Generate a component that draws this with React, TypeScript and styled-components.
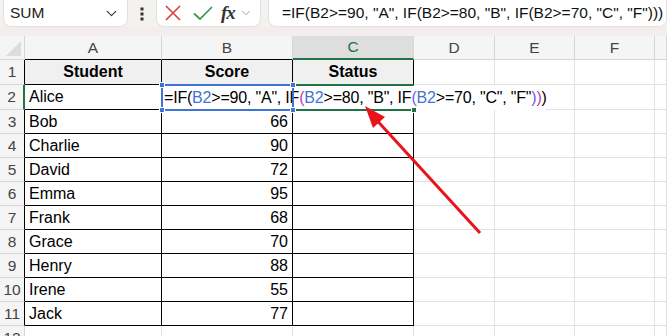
import styled, { createGlobalStyle } from "styled-components";
import { ChevronDown } from "lucide-react";

const Global = createGlobalStyle`
  html, body { margin: 0; padding: 0; }
  body {
    width: 667px;
    height: 336px;
    overflow: hidden;
    background: #f4f2f1;
    font-family: "Liberation Sans", Arial, sans-serif;
  }
`;

const Page = styled.div`
  width: 667px;
  height: 336px;
  overflow: hidden;
  position: relative;
  display: flex;
  flex-direction: column;
`;

const Toolbar = styled.div`
  display: flex;
  flex-shrink: 0;
  align-items: stretch;
  height: 27px;
  padding: 0 0 0 3px;
  gap: 7px;
  background: #f4f2f1;
`;

const Box = styled.div<{ $w?: number }>`
  display: flex;
  align-items: center;
  background: #fff;
  border: 1px solid #e3e1df;
  border-top: none;
  border-radius: 0 0 8px 8px;
  box-sizing: border-box;
  width: ${(p) => (p.$w ? `${p.$w}px` : "auto")};
  flex: ${(p) => (p.$w ? "none" : "1")};
`;

const NameText = styled.span`
  flex: 1;
  padding-left: 6px;
  font-size: 15.5px;
  color: #222;
`;

const Dots = styled.div`
  width: 14px;
  display: flex;
  align-items: center;
  justify-content: center;
`;

const FxText = styled.span`
  font-family: "Liberation Serif", "DejaVu Serif", serif;
  font-style: italic;
  font-weight: bold;
  font-size: 19px;
  color: #333;
  margin-left: 8px;
  letter-spacing: -1px;
`;

const FormulaText = styled.span`
  padding-left: 13px;
  font-size: 15.5px;
  color: #111;
  white-space: nowrap;
`;

const Band = styled.div`
  flex-shrink: 0;
  height: 9px;
  background: #f3eeed;
`;

const Sheet = styled.div`
  position: relative;
  flex: 1;
  min-height: 0;
  display: grid;
  grid-template-columns: 25px 137px 131px 121px 81px 80px 80px 1fr;
  grid-template-rows: 24px 25px 25px repeat(10, 24px);
  background: #fff;
`;

const ColHead = styled.div<{ $sel?: boolean; $dark?: boolean }>`
  display: flex;
  align-items: center;
  justify-content: center;
  font-size: 15.5px;
  color: ${(p) => (p.$sel ? "#1e7145" : "#444")};
  background: ${(p) => (p.$sel ? "#dedede" : "#f5f5f5")};
  border-right: 1px solid #d6d6d6;
  border-bottom: ${(p) =>
    p.$sel ? "2px solid #217346" : p.$dark ? "1px solid #000" : "1px solid #d6d6d6"};
  box-sizing: border-box;
`;

const Corner = styled.div`
  background: #f5f5f5;
  border-right: 1px solid #d6d6d6;
  border-bottom: 1px solid #d6d6d6;
  box-sizing: border-box;
  position: relative;
  &::after {
    content: "";
    position: absolute;
    right: 3px;
    bottom: 3px;
    border-left: 15px solid transparent;
    border-bottom: 15px solid #dcdcdc;
  }
`;

const RowHead = styled.div<{ $sel?: boolean; $dark?: boolean }>`
  display: flex;
  align-items: center;
  justify-content: center;
  font-size: 15.5px;
  color: #444;
  background: #f5f5f5;
  border-bottom: 1px solid #d6d6d6;
  border-right: ${(p) =>
    p.$sel ? "2px solid #217346" : p.$dark ? "1px solid #000" : "1px solid #d6d6d6"};
  box-sizing: border-box;
`;

const Cell = styled.div<{ $table?: boolean; $head?: boolean; $num?: boolean }>`
  display: flex;
  align-items: center;
  justify-content: ${(p) => (p.$head ? "center" : p.$num ? "flex-end" : "flex-start")};
  padding: 0 4px;
  font-size: 16px;
  font-weight: ${(p) => (p.$head ? "bold" : "normal")};
  color: #000;
  background: ${(p) => (p.$head ? "#f0f0f0" : "#fff")};
  border-right: 1px solid ${(p) => (p.$table ? "#000" : "#e1e1e1")};
  border-bottom: 1px solid ${(p) => (p.$table ? "#000" : "#e1e1e1")};
  box-sizing: border-box;
  white-space: nowrap;
  overflow: hidden;
`;

const Editor = styled.div`
  position: absolute;
  left: 162px;
  top: 49px;
  width: 384px;
  height: 25px;
  background: #fff;
  display: flex;
  align-items: center;
  padding-left: 2px;
  box-sizing: border-box;
  font-size: 16px;
  letter-spacing: -0.2px;
  color: #000;
  white-space: nowrap;
`;

const Caret = styled.span`
  display: inline-block;
  width: 1px;
  height: 20px;
  background: #000;
  margin-left: 2px;
`;

const Tok = styled.span<{ $c: string }>`
  color: ${(p) => p.$c};
`;

const RefBox = styled.div`
  position: absolute;
  left: 161px;
  top: 48px;
  width: 133px;
  height: 27px;
  border: 2px solid #3f74d6;
  box-sizing: border-box;
  pointer-events: none;
`;

const Handle = styled.div<{ $x: number; $y: number; $c: string }>`
  position: absolute;
  left: ${(p) => p.$x - 3}px;
  top: ${(p) => p.$y - 3}px;
  width: 6px;
  height: 6px;
  background: ${(p) => p.$c};
  border: 1px solid #fff;
  box-sizing: border-box;
`;

const ActiveEdge = styled.div<{ $y: number }>`
  position: absolute;
  left: 294px;
  top: ${(p) => p.$y}px;
  width: 120px;
  height: 2px;
  background: #217346;
`;

const ArrowLayer = styled.svg`
  position: absolute;
  left: 0;
  top: 0;
  pointer-events: none;
`;

const rows: [string, number][] = [
  ["Alice", 0],
  ["Bob", 66],
  ["Charlie", 90],
  ["David", 72],
  ["Emma", 95],
  ["Frank", 68],
  ["Grace", 70],
  ["Henry", 88],
  ["Irene", 55],
  ["Jack", 77],
];

const BLUE = "#3f74d6";
const P2 = "#b03fb8";
const P3 = "#6f5ce0";

const formula = '=IF(B2>=90, "A", IF(B2>=80, "B", IF(B2>=70, "C", "F")))';

export default function App() {
  const cols = ["A", "B", "C", "D", "E", "F", ""];
  return (
    <Page>
      <Global />
      <Toolbar>
        <Box $w={125}>
          <NameText>SUM</NameText>
          <ChevronDown size={17} color="#333" strokeWidth={1.6} style={{ marginRight: 7 }} />
        </Box>
        <Dots>
          <svg width="4" height="14" viewBox="0 0 4 14">
            <rect x="0.5" y="0.5" width="3" height="3" fill="#333" />
            <rect x="0.5" y="5.5" width="3" height="3" fill="#333" />
            <rect x="0.5" y="10.5" width="3" height="3" fill="#333" />
          </svg>
        </Dots>
        <Box $w={105}>
          <svg width="16" height="16" viewBox="0 0 16 16" style={{ marginLeft: 8 }}>
            <path d="M1 1 L15 15 M15 1 L1 15" stroke="#e0393e" strokeWidth="1.6" />
          </svg>
          <svg width="20" height="16" viewBox="0 0 20 16" style={{ marginLeft: 12 }}>
            <path d="M1 8.5 L7 14 L19 2" stroke="#3a9a47" strokeWidth="1.7" fill="none" />
          </svg>
          <FxText>fx</FxText>
          <ChevronDown size={14} color="#999" strokeWidth={1.5} style={{ marginLeft: 4 }} />
        </Box>
        <Box>
          <FormulaText>{formula}</FormulaText>
        </Box>
      </Toolbar>
      <Band />
      <Sheet>
        <Corner />
        {cols.map((c, i) => (
          <ColHead key={c + i} $sel={c === "C"} $dark={i < 3}>
            {c}
          </ColHead>
        ))}

        <RowHead $dark>1</RowHead>
        <Cell $table $head>Student</Cell>
        <Cell $table $head>Score</Cell>
        <Cell $table $head>Status</Cell>
        <Cell /><Cell /><Cell /><Cell />

        {rows.map(([name, score], i) => (
          <>
            <RowHead key={"h" + i} $sel={i === 0} $dark={i !== 0}>
              {i + 2}
            </RowHead>
            <Cell key={"a" + i} $table>{name}</Cell>
            <Cell key={"b" + i} $table $num>{score ? score : ""}</Cell>
            <Cell key={"c" + i} $table />
            <Cell key={"d" + i} />
            <Cell key={"e" + i} />
            <Cell key={"f" + i} />
            <Cell key={"g" + i} />
          </>
        ))}

        <RowHead>12</RowHead>
        <Cell /><Cell /><Cell /><Cell /><Cell /><Cell /><Cell />

        <Editor>
          <Tok $c="#000">=IF(</Tok>
          <Tok $c={BLUE}>B2</Tok>
          <Tok $c="#000">{'>=90, "A", IF'}</Tok>
          <Tok $c={P2}>(</Tok>
          <Tok $c={BLUE}>B2</Tok>
          <Tok $c="#000">{'>=80, "B", IF'}</Tok>
          <Tok $c={P3}>(</Tok>
          <Tok $c={BLUE}>B2</Tok>
          <Tok $c="#000">{'>=70, "C", "F"'}</Tok>
          <Tok $c={P3}>)</Tok>
          <Tok $c={P2}>)</Tok>
          <Tok $c="#000">)</Tok>
          <Caret />
        </Editor>
        <RefBox />
        <ActiveEdge $y={48} />
        <ActiveEdge $y={73} />
        <Handle $x={162} $y={49} $c={BLUE} />
        <Handle $x={293} $y={49} $c={BLUE} />
        <Handle $x={162} $y={74} $c={BLUE} />
        <Handle $x={293} $y={74} $c={BLUE} />
        <Handle $x={414} $y={74} $c="#217346" />
      </Sheet>
      <ArrowLayer width="667" height="336" viewBox="0 0 667 336">
        <line x1="480" y1="233" x2="372" y2="115" stroke="#e8141b" strokeWidth="3" />
        <polygon points="365,106 385,117 373,128" fill="#e8141b" />
      </ArrowLayer>
    </Page>
  );
}
